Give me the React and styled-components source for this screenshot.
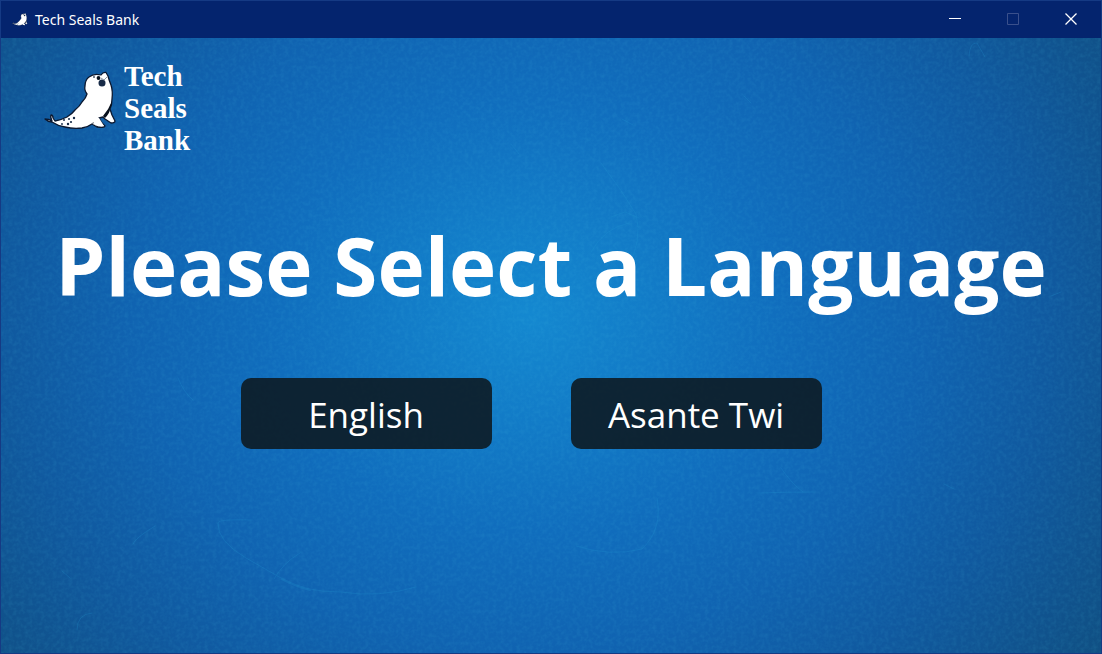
import React from "react";
import styled, { createGlobalStyle } from "styled-components";

const GlobalStyle = createGlobalStyle`
  *, *::before, *::after { box-sizing: border-box; }
  body { margin: 0; font-family: "Open Sans", sans-serif; color: #fff; }
`;

const Window = styled.div`
  display: flex;
  flex-direction: column;
  min-height: 100vh;
  border: 1px solid #153a84;
  background: #04246e;
`;

const TitleBar = styled.header`
  display: flex;
  align-items: center;
  justify-content: space-between;
  height: 37px;
  padding-left: 11px;
`;

const AppName = styled.div`
  display: flex;
  align-items: center;
  gap: 7px;
  font-family: "Noto Sans", sans-serif;
  font-size: 14px;
  line-height: 20px;
`;

const Controls = styled.div`
  display: flex;
  align-self: stretch;
  padding: 0 1px 2px 0;
`;

const ControlButton = styled.button`
  display: grid;
  place-items: center;
  width: 58px;
  padding: 0;
  border: 0;
  background: transparent;
  color: ${(p) => (p.disabled ? "#3a508c" : "#fff")};
`;

const Screen = styled.main`
  position: relative;
  isolation: isolate;
  flex: 1;
  padding: 22px 40px 40px;
  background: radial-gradient(
    ellipse 58% 88% at 48% 45%,
    #1488d0 0%,
    #127bc7 20%,
    #106dbd 40%,
    #1063b1 62%,
    #10599f 82%,
    #10528c 100%,
    #0f4c74 125%
  );
`;

const Texture = styled.svg`
  position: absolute;
  inset: 0;
  z-index: -1;
  width: 100%;
  height: 100%;
`;

const Brand = styled.div`
  display: flex;
  align-items: center;
  gap: 6px;
  padding-left: 3px;
`;

const BrandMark = styled.div`
  display: flex;
  padding-bottom: 15px;
`;

const BrandName = styled.div`
  font-family: "Liberation Serif", serif;
  font-size: 29px;
  font-weight: 700;
  line-height: 32px;
`;

const Heading = styled.h1`
  margin: 53px 0 0;
  font-size: 80px;
  line-height: 112px;
  font-weight: 700;
  text-align: center;
  white-space: nowrap;
`;

const Choices = styled.div`
  display: flex;
  justify-content: center;
  gap: 79px;
  margin-top: 57px;
  padding-right: 40px;
`;

const ChoiceButton = styled.button`
  width: 251px;
  height: 71px;
  padding: 2px 0 0;
  border: 0;
  border-radius: 10px;
  background: rgba(13, 27, 35, 0.9);
  color: #fff;
  font-family: inherit;
  font-size: 35px;
  line-height: 48px;
`;

function Seal({ width, height }) {
  return (
    <svg width={width} height={height} viewBox="0 0 74 60" aria-hidden="true">
      <path
        d="M1 48 Q5 48 8 50 Q6 46 7 44 Q9 44 9 47 L11 50 Q17 49 23 46 Q28 43 31 39 Q36 35 38 31 Q42 27 43 23 Q40 19 41 15 Q41 9 45 6 Q50 2 57 4 Q59 1 62 1.500 L64 5 Q65 9 67 14 Q69 20 68 28 Q68 34 66 38 L68 44 L71 50 Q71 52 67 52 L61 48 L59 46 L55 47 L58 52 L61 55 Q61 57 53 56 L48 53 Q44 56 38 57 Q29 58 21 56 Q14 55 8 51 Q4 51 1 48Z"
        fill="#fff"
        stroke="#0b1830"
        strokeWidth="1.3"
        strokeLinejoin="round"
      />
      <path d="M68 30 Q65 38 59 45 L61 47 Q66 42 66 38 Q68 34 68 30Z M48 52 L54 50 L54 56Z" fill="#07101c" />
      <path d="M49 53 L52 47 L55 47 L60 55 L53 55Z" fill="#fff" />
      <circle cx="58" cy="12" r="3.500" fill="#172b47" />
      <circle cx="54.500" cy="7" r="1.900" fill="#07101c" />
      <circle cx="50" cy="6" r="0.900" fill="#39475b" />
      <path d="M57 7 L60 9 L63 6" fill="none" stroke="#8d98a5" strokeWidth="1" />
      <g fill="#172b47">
        <circle cx="18" cy="53" r="0.900" />
        <circle cx="20" cy="49" r="1" />
        <circle cx="24" cy="53" r="1.200" />
        <circle cx="25" cy="48" r="1" />
        <circle cx="27" cy="51" r="1.100" />
        <circle cx="30" cy="47" r="1.200" />
      </g>
    </svg>
  );
}

function PaperTexture() {
  return (
    <Texture viewBox="0 0 1100 615" preserveAspectRatio="none" aria-hidden="true">
      <defs>
        <filter id="grain" x="0" y="0" width="100%" height="100%">
          <feTurbulence type="fractalNoise" baseFrequency="0.25" numOctaves="3" seed="4" />
          <feColorMatrix values="0 0 0 0 0.08  0 0 0 0 0.58  0 0 0 0 0.78  0.5 0 0 0 -0.18" />
        </filter>
      </defs>
      <rect width="1100" height="615" filter="url(#grain)" opacity="0.4" />
      <g fill="none" stroke="#249bd4" strokeLinecap="round" opacity="0.22">
        <path d="M250 482 Q217 481 217 485 Q216 503 245 520 L280 540 Q302 554 340 554 Q378 560 415 549" />
        <path d="M273 541 Q282 525 299 515" />
        <path d="M281 541 Q294 548 309 552" strokeWidth="2" />
        <path d="M610 179 L624 174 L638 180 M628 185 Q603 190 590 214" />
        <path d="M968 18 Q969 4 976 5 L984 19 M743 58 L750 65" />
        <path d="M758 455 Q787 454 813 454 M780 430 Q791 446 802 454" />
        <path d="M76 592 Q76 576 91 575 M61 533 L69 540" />
        <path d="M621 81 L632 87 M510 106 L518 116" />
        <path d="M656 460 Q662 491 641 511 Q610 519 575 508" />
        <path d="M943 446 L953 451 M177 340 Q183 355 192 362" />
        <path d="M600 125 Q620 151 635 176 Q642 203 626 230" />
        <path d="M132 506 Q134 500 154 488 M1050 258 L1060 254" />
      </g>
    </Texture>
  );
}

export default function App() {
  return (
    <>
      <GlobalStyle />
      <Window>
        <TitleBar>
          <AppName>
            <Seal width={16} height={13} />
            <span>Tech Seals Bank</span>
          </AppName>
          <Controls>
            <ControlButton aria-label="Minimize">
              <svg width="12" height="12" stroke="currentColor">
                <path d="M0 5.500H12" />
              </svg>
            </ControlButton>
            <ControlButton aria-label="Maximize" disabled>
              <svg width="12" height="12" fill="none" stroke="currentColor">
                <path d="M0.500 0.500H11.500V11.500H0.500Z" />
              </svg>
            </ControlButton>
            <ControlButton aria-label="Close">
              <svg width="12" height="12" stroke="currentColor" strokeWidth="1.300">
                <path d="M0.500 0.500L11.500 11.500M11.500 0.500L0.500 11.500" />
              </svg>
            </ControlButton>
          </Controls>
        </TitleBar>
        <Screen>
          <PaperTexture />
          <Brand>
            <BrandMark>
              <Seal width={74} height={60} />
            </BrandMark>
            <BrandName>
              Tech
              <br />
              Seals
              <br />
              Bank
            </BrandName>
          </Brand>
          <Heading>Please Select a Language</Heading>
          <Choices>
            <ChoiceButton>English</ChoiceButton>
            <ChoiceButton>Asante Twi</ChoiceButton>
          </Choices>
        </Screen>
      </Window>
    </>
  );
}
